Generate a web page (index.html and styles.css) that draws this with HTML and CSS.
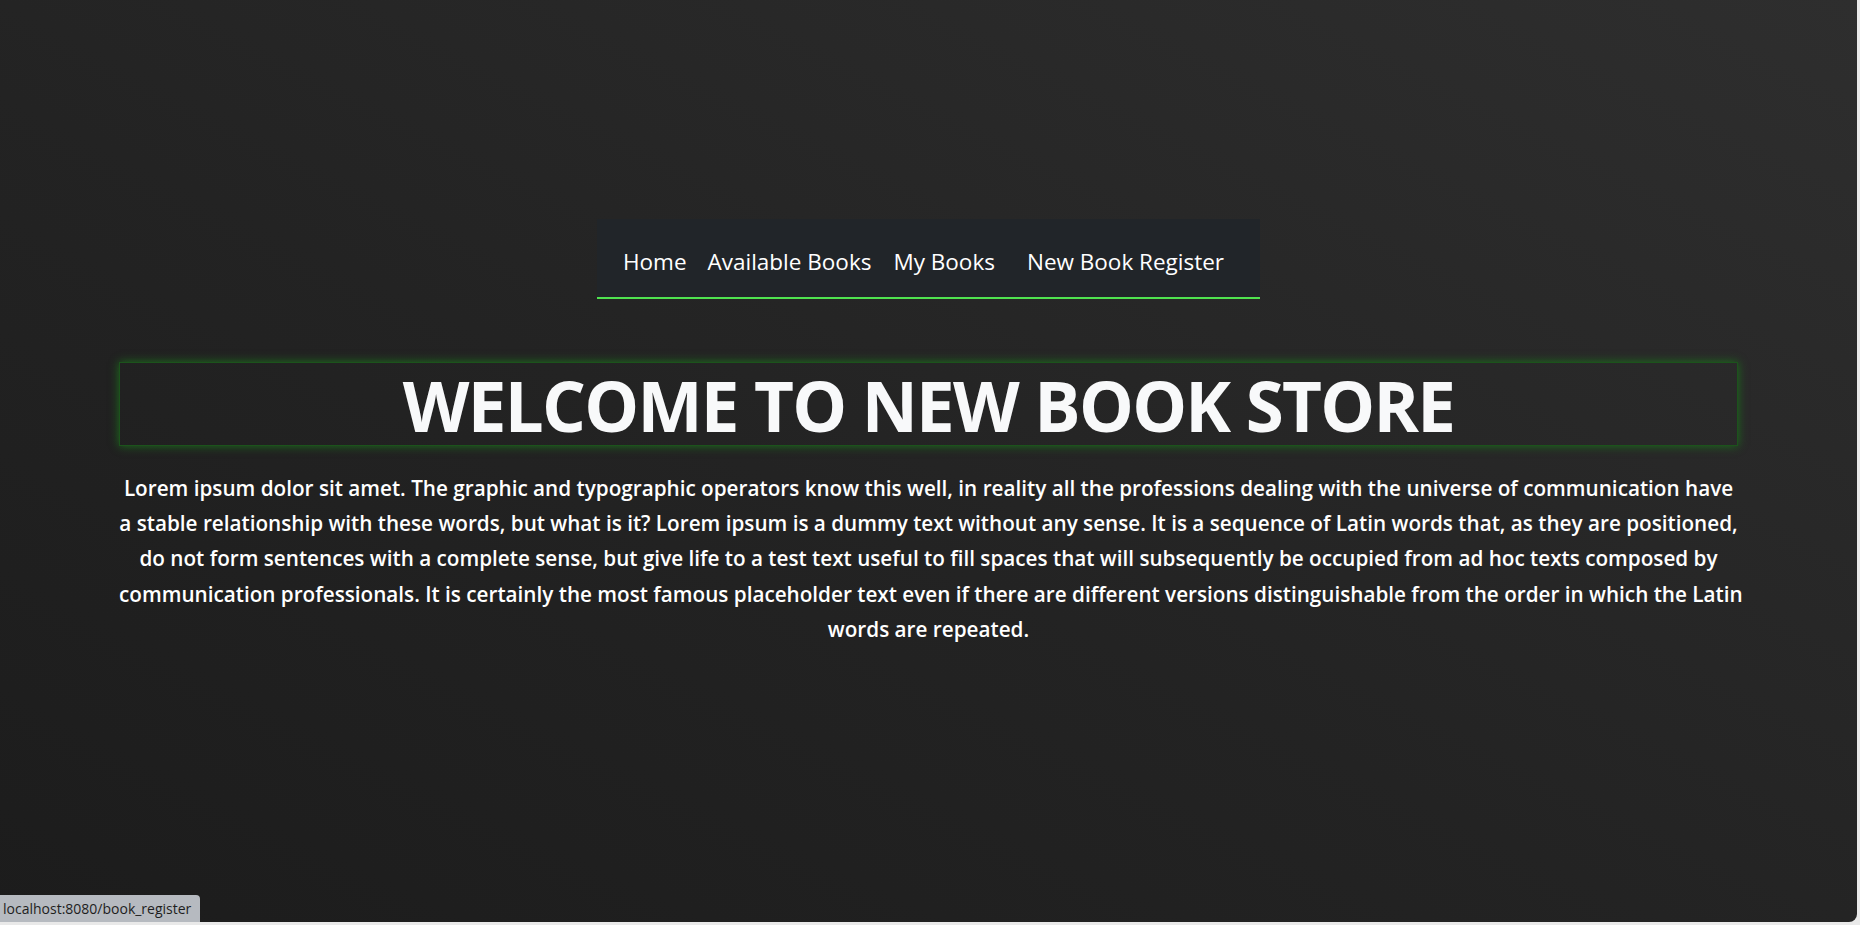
FILE: index.html
```html
<!DOCTYPE html>
<html lang="en">
<head>
<meta charset="utf-8">
<title>New Book Store</title>
<link rel="stylesheet" href="styles.css">
</head>
<body>
<div class="page">
  <nav class="topnav">
    <a class="nav-link" href="#">Home</a>
    <a class="nav-link nl-2" href="#">Available Books</a>
    <a class="nav-link nl-3" href="#">My Books</a>
    <a class="nav-link nl-4" href="#">New Book Register</a>
  </nav>
  <main class="content">
    <h1 class="welcome">WELCOME TO NEW BOOK STORE</h1>
    <p class="intro">Lorem ipsum dolor sit amet. The graphic and typographic operators know this well, in reality all the professions dealing with the universe of communication have<br>a stable relationship with these words, but what is it? Lorem ipsum is a dummy text without any sense. It is a sequence of Latin words that, as they are positioned,<br>do not form sentences with a complete sense, but give life to a test text useful to fill spaces that will subsequently be occupied from ad hoc texts composed by<br>communication professionals. It is certainly the most famous placeholder text even if there are different versions distinguishable from the order in which the Latin<br>words are repeated.</p>
  </main>
  <div class="status">localhost:8080/book_register</div>
</div>
</body>
</html>
```

FILE: styles.css
```css
html, body {
  margin: 0;
  padding: 0;
  height: 100%;
  background: #e9e9e9;
  overflow: hidden;
}
.page {
  position: relative;
  box-sizing: border-box;
  width: calc(100% - 3px);
  height: calc(100% - 3px);
  background: linear-gradient(to top right, #1c1c1c 0%, #232323 45%, #2e2e2e 100%);
  border-bottom-right-radius: 8px;
  overflow: hidden;
  font-family: "Open Sans", "Noto Sans", sans-serif;
  display: flex;
  flex-direction: column;
}
.topnav {
  display: flex;
  align-items: center;
  width: fit-content;
  height: 78px;
  margin: 219px auto 0;
  padding: 0 36px 0 26px;
  background: #212529;
  border-bottom: 2px solid #4fe34f;
}
.nav-link {
  color: #ffffff;
  text-decoration: none;
  font-size: 22.5px;
  line-height: 1;
  padding-top: 8px;
}
.nl-2 { margin-left: 21px; }
.nl-3 { margin-left: 22px; }
.nl-4 { margin-left: 32px; }
.content {
  width: 1619px;
  margin: 63px auto 0;
}
.welcome {
  margin: 0;
  height: 82px;
  border: 1px solid #1c531c;
  box-shadow: 0 0 9px #1d6e1d;
  color: #f8f9fa;
  font-size: 69px;
  font-weight: 700;
  line-height: 84px;
  text-align: center;
  letter-spacing: -1.7px;
}
.intro {
  margin: 25px 0 0;
  color: #ffffff;
  font-size: 20.7px;
  font-weight: 600;
  line-height: 35.2px;
  text-align: center;
  white-space: nowrap;
}
.status {
  position: absolute;
  left: 0;
  bottom: 0;
  height: 27px;
  padding: 0 9px 0 3px;
  background: #b6bac0;
  border-top-right-radius: 4px;
  color: #1e1e1e;
  font-size: 14px;
  line-height: 28px;
  font-family: "Open Sans", "Noto Sans", sans-serif;
}
```
